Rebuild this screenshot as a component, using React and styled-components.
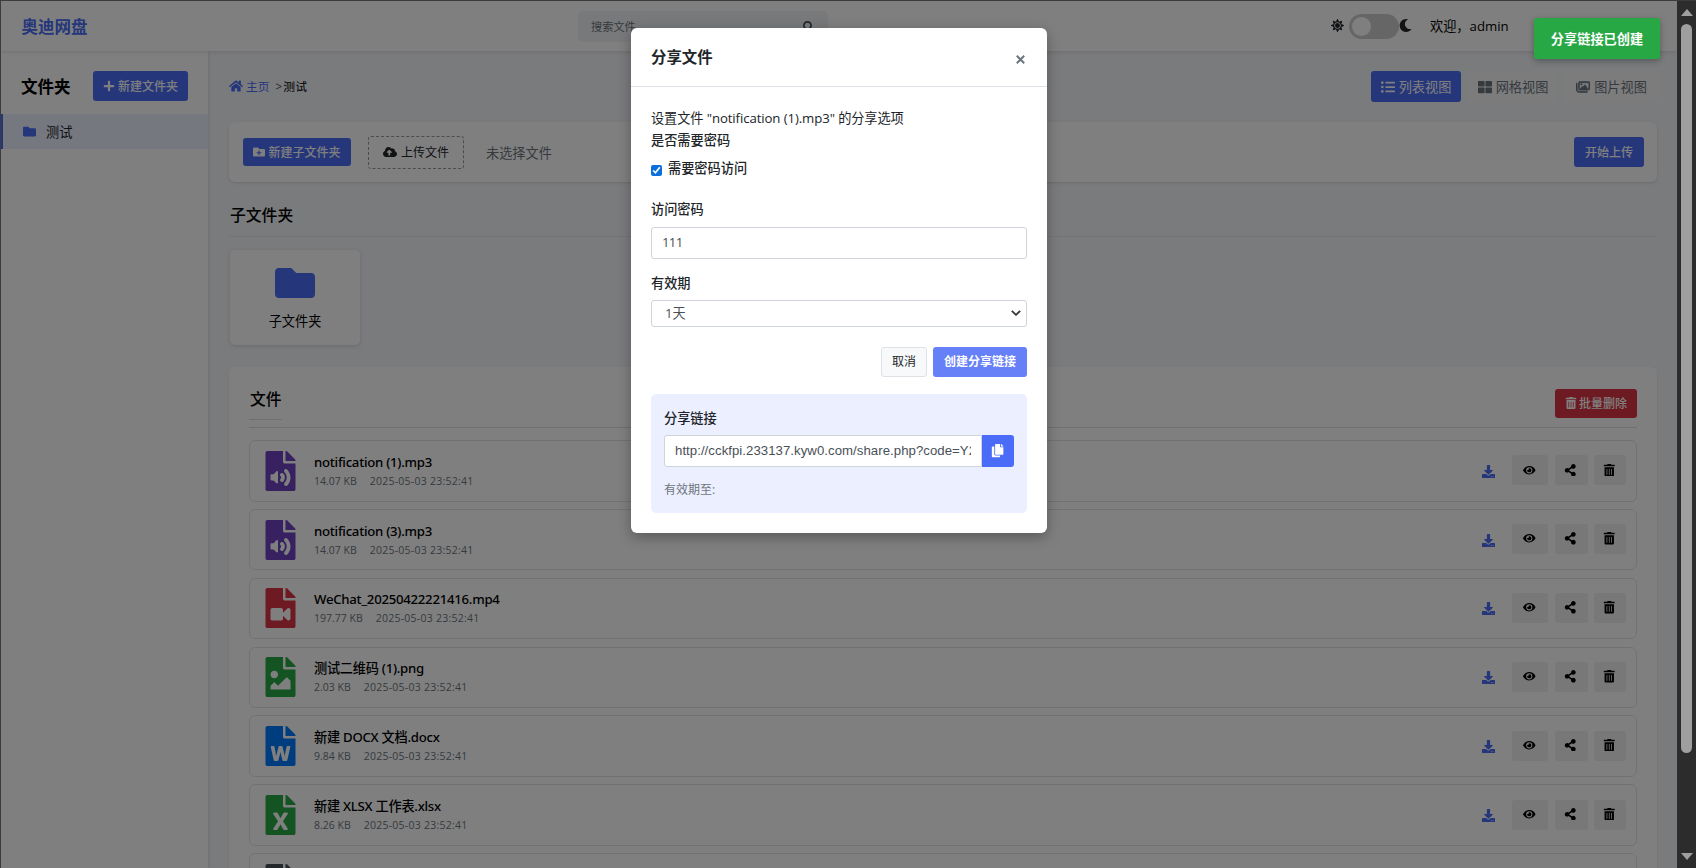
import styled, { createGlobalStyle, css } from 'styled-components';
import {
  FaPlus,
  FaHome,
  FaFolder,
  FaFolderPlus,
  FaCloudUploadAlt,
  FaListUl,
  FaThLarge,
  FaSearch,
  FaSun,
  FaMoon,
  FaTrashAlt,
  FaDownload,
  FaEye,
  FaShareAlt,
  FaSignOutAlt,
  FaFileAudio,
  FaFileVideo,
  FaFileImage,
  FaFileWord,
  FaFileExcel,
  FaFileAlt,
  FaCopy,
} from 'react-icons/fa';
import { FaRegImages } from 'react-icons/fa6';

const files = [
  { name: 'notification (1).mp3', size: '14.07 KB', icon: FaFileAudio, color: '#6f42c1' },
  { name: 'notification (3).mp3', size: '14.07 KB', icon: FaFileAudio, color: '#6f42c1' },
  { name: 'WeChat_20250422221416.mp4', size: '197.77 KB', icon: FaFileVideo, color: '#dc3545' },
  { name: '测试二维码 (1).png', size: '2.03 KB', icon: FaFileImage, color: '#28a745' },
  { name: '新建 DOCX 文档.docx', size: '9.84 KB', icon: FaFileWord, color: '#007bff' },
  { name: '新建 XLSX 工作表.xlsx', size: '8.26 KB', icon: FaFileExcel, color: '#28a745' },
];

const FileRow = ({ file }) => {
  const Icon = file.icon;
  return (
    <Row>
      <FileIcon $color={file.color}>
        <Icon />
      </FileIcon>
      <FileInfo>
        <FileName>{file.name}</FileName>
        <FileMeta>
          <span>{file.size}</span>
          <FileDate>2025-05-03 23:52:41</FileDate>
        </FileMeta>
      </FileInfo>
      <Actions>
        <DownloadLink>
          <FaDownload />
        </DownloadLink>
        <ActionButton $width={36}>
          <FaEye />
        </ActionButton>
        <ActionButton $width={33}>
          <FaShareAlt />
        </ActionButton>
        <ActionButton $width={32}>
          <FaTrashAlt />
        </ActionButton>
      </Actions>
    </Row>
  );
};

const ShareModal = () => (
  <Modal>
    <ModalHeader>
      <ModalTitle>分享文件</ModalTitle>
      <CloseButton>
        <svg width="9" height="9" viewBox="0 0 9 9">
          <path d="M0.8 0.8 8.2 8.2M8.2 0.8 0.8 8.2" stroke="#6c757d" strokeWidth="2" />
        </svg>
      </CloseButton>
    </ModalHeader>
    <ModalBody>
      <ModalText>设置文件 "notification (1).mp3" 的分享选项</ModalText>
      <Label>是否需要密码</Label>
      <CheckRow>
        <Checkbox type="checkbox" defaultChecked />
        需要密码访问
      </CheckRow>
      <Label>访问密码</Label>
      <PasswordInput defaultValue="111" />
      <Label>有效期</Label>
      <SelectBox>
        1天
        <svg width="10" height="6" viewBox="0 0 10 6">
          <path d="M0.8 0.8 5 4.8 9.2 0.8" fill="none" stroke="#333" strokeWidth="1.8" />
        </svg>
      </SelectBox>
      <ModalButtons>
        <CancelButton>取消</CancelButton>
        <CreateButton>创建分享链接</CreateButton>
      </ModalButtons>
      <ResultBox>
        <Label>分享链接</Label>
        <LinkGroup>
          <LinkInput readOnly value="http://cckfpi.233137.kyw0.com/share.php?code=Y2" />
          <CopyButton>
            <FaCopy />
          </CopyButton>
        </LinkGroup>
        <Expire>有效期至:</Expire>
      </ResultBox>
    </ModalBody>
  </Modal>
);

const App = () => (
  <Screen>
    <GlobalStyle />
    <Page>
      <Header>
        <Logo>奥迪网盘</Logo>
        <Search>
          搜索文件
          <FaSearch />
        </Search>
        <UserArea>
          <FaSun />
          <Switch />
          <FaMoon />
          <Welcome>欢迎，admin</Welcome>
          <Logout>
            <FaSignOutAlt />
          </Logout>
        </UserArea>
      </Header>
      <Columns>
        <Sidebar>
          <SidebarHead>
            <SidebarTitle>文件夹</SidebarTitle>
            <Button $width={95} $height={30}>
              <FaPlus />
              新建文件夹
            </Button>
          </SidebarHead>
          <FolderItem>
            <FaFolder />
            测试
          </FolderItem>
        </Sidebar>
        <Content>
          <TopBar>
            <Breadcrumb>
              <a>
                <FaHome />
                主页
              </a>
              <i>&gt;</i>
              测试
            </Breadcrumb>
            <Views>
              <ViewButton $active $width={90}>
                <FaListUl />
                列表视图
              </ViewButton>
              <ViewButton $width={90}>
                <FaThLarge />
                网格视图
              </ViewButton>
              <ViewButton $width={93}>
                <FaRegImages stroke="currentColor" strokeWidth="24" />
                图片视图
              </ViewButton>
            </Views>
          </TopBar>
          <UploadCard>
            <Button $width={108} $height={28}>
              <FaFolderPlus />
              新建子文件夹
            </Button>
            <UploadLabel>
              <FaCloudUploadAlt />
              上传文件
            </UploadLabel>
            <NoFile>未选择文件</NoFile>
            <Button $width={70} $height={30}>
              开始上传
            </Button>
          </UploadCard>
          <SectionTitle>子文件夹</SectionTitle>
          <SubFolder>
            <FaFolder />
            子文件夹
          </SubFolder>
          <FilesCard>
            <FilesHead>
              <FilesTitle>文件</FilesTitle>
              <DeleteButton>
                <FaTrashAlt />
                批量删除
              </DeleteButton>
            </FilesHead>
            {files.map((file) => (
              <FileRow key={file.name} file={file} />
            ))}
            <Row>
              <FileIcon $color="#495057">
                <FaFileAlt />
              </FileIcon>
            </Row>
          </FilesCard>
        </Content>
      </Columns>
    </Page>
    <Scrollbar>
      <Arrow />
      <Thumb />
      <Arrow $down />
    </Scrollbar>
    <Overlay>
      <ShareModal />
    </Overlay>
    <Toast>分享链接已创建</Toast>
  </Screen>
);

const GlobalStyle = createGlobalStyle`
  * {
    box-sizing: border-box;
  }
  body {
    margin: 0;
    background: #3c3c3e;
    overflow: hidden;
  }
  input {
    font-family: inherit;
  }
`;

const center = css`
  display: flex;
  align-items: center;
  justify-content: center;
`;

const Screen = styled.div`
  position: relative;
  display: flex;
  width: 1696px;
  height: 868px;
  padding: 1px 0 0 1px;
  overflow: hidden;
  font-family: 'Open Sans', 'Noto Sans CJK SC', sans-serif;
  font-size: 13.2px;
  color: #212529;
  white-space: nowrap;
`;

const Page = styled.div`
  width: 1676px;
  height: 867px;
  overflow: hidden;
  background: #f5f6fa;
`;

const Header = styled.header`
  position: relative;
  z-index: 1;
  display: flex;
  align-items: center;
  height: 50px;
  padding-left: 20.5px;
  background: white;
  box-shadow: 0 1px 4px rgba(0, 0, 0, 0.12);
`;

const Logo = styled.div`
  width: 556.5px;
  font-size: 16.5px;
  font-weight: 700;
  color: #4a6cf7;
`;

const Search = styled.div`
  display: flex;
  align-items: center;
  justify-content: space-between;
  width: 250px;
  height: 31px;
  padding: 0 14px 0 13px;
  border-radius: 5px;
  background: #f1f2f6;
  font-size: 11.2px;
  color: #6c757d;
  svg {
    font-size: 11px;
    color: #495057;
  }
`;

const UserArea = styled.div`
  display: flex;
  align-items: center;
  margin-left: 503px;
  padding-bottom: 1px;
  svg {
    font-size: 13px;
  }
`;

const Switch = styled.span`
  width: 50px;
  height: 25px;
  margin: 1px 0 0 5px;
  padding: 3px;
  border-radius: 13px;
  background: #ccc;
  &::before {
    content: '';
    display: block;
    width: 19px;
    height: 19px;
    border-radius: 50%;
    background: white;
  }
`;

const Welcome = styled.span`
  margin-left: 18px;
  color: #000;
`;

const Logout = styled.span`
  display: flex;
  margin-left: 25px;
  color: #4a6cf7;
`;

const Columns = styled.div`
  display: flex;
  height: 817px;
`;

const Sidebar = styled.aside`
  width: 207px;
  background: white;
  box-shadow: 1px 0 3px rgba(0, 0, 0, 0.1);
`;

const SidebarHead = styled.div`
  display: flex;
  align-items: center;
  justify-content: space-between;
  height: 63px;
  padding: 7px 20px 0;
`;

const SidebarTitle = styled.h3`
  margin: 0;
  font-size: 16.5px;
  font-weight: 700;
  color: #000;
`;

const Button = styled.button`
  ${center}
  gap: 3px;
  width: ${(props) => props.$width}px;
  height: ${(props) => props.$height}px;
  padding: 0 0 1px;
  border: 0;
  border-radius: 3px;
  background: #4a6cf7;
  font-family: inherit;
  font-size: 12px;
  font-weight: 500;
  color: white;
  white-space: nowrap;
`;

const DeleteButton = styled(Button).attrs({ $width: 82, $height: 29 })`
  gap: 2px;
  margin-top: 1px;
  background: #dc3545;
`;

const FolderItem = styled.div`
  display: flex;
  align-items: center;
  gap: 10px;
  height: 35px;
  padding: 0 0 1px 20px;
  border-left: 2px solid #4a6cf7;
  background: #ebf0ff;
  svg {
    font-size: 13px;
    color: #4a6cf7;
  }
`;

const Content = styled.main`
  flex: 1;
  padding: 20px 20px 0 21px;
`;

const TopBar = styled.div`
  display: flex;
  align-items: center;
  justify-content: space-between;
  height: 31px;
  margin-right: -1px;
`;

const Breadcrumb = styled.div`
  display: flex;
  align-items: center;
  padding-bottom: 2px;
  font-size: 11.8px;
  color: #000;
  a {
    display: flex;
    align-items: center;
    gap: 3px;
    color: #4a6cf7;
  }
  a svg {
    font-size: 14px;
  }
  i {
    margin: 0 1px 0 6px;
    font-style: normal;
    color: #555;
  }
`;

const Views = styled.div`
  display: flex;
  gap: 7px;
`;

const ViewButton = styled.button`
  ${center}
  gap: 4px;
  width: ${(props) => props.$width}px;
  height: 31px;
  padding: 0;
  border: 0;
  border-radius: 3px;
  background: ${(props) => (props.$active ? '#4a6cf7' : '#f8f9fa')};
  font-family: inherit;
  font-size: 13.2px;
  color: ${(props) => (props.$active ? 'white' : '#6c757d')};
  svg {
    font-size: 14px;
  }
`;

const UploadCard = styled.section`
  display: flex;
  align-items: center;
  height: 60px;
  margin-top: 20px;
  padding: 0 13px 0 14px;
  border-radius: 6px;
  background: white;
  box-shadow: 0 1px 3px rgba(0, 0, 0, 0.12);
`;

const UploadLabel = styled.div`
  ${center}
  gap: 4px;
  width: 96px;
  height: 33px;
  margin-left: 17px;
  border: 1px dashed #999;
  border-radius: 3px;
  font-size: 12px;
  svg {
    font-size: 14px;
  }
`;

const NoFile = styled.span`
  flex: 1;
  margin-left: 22px;
  color: #6c757d;
`;

const SectionTitle = styled.h4`
  display: flex;
  align-items: center;
  height: 44px;
  margin: 11px 0 13px;
  padding-left: 1px;
  border-bottom: 1px solid #e8e9ed;
  font-size: 15.8px;
  font-weight: 500;
  color: #000;
`;

const SubFolder = styled.div`
  display: flex;
  flex-direction: column;
  align-items: center;
  gap: 8px;
  width: 130px;
  height: 95px;
  margin-left: 1px;
  padding-top: 13px;
  border-radius: 5px;
  background: white;
  box-shadow: 0 1px 4px rgba(0, 0, 0, 0.14);
  color: #000;
  svg {
    font-size: 40px;
    color: #4a6cf7;
  }
`;

const FilesCard = styled.section`
  height: 520px;
  margin-top: 22px;
  padding: 0 20px;
  border-radius: 6px;
  background: white;
  box-shadow: 0 1px 3px rgba(0, 0, 0, 0.08);
`;

const FilesHead = styled.div`
  display: flex;
  align-items: flex-start;
  justify-content: space-between;
  height: 61px;
  margin-bottom: 12px;
  padding-top: 21px;
  border-bottom: 1px solid #e0e1e5;
`;

const FilesTitle = styled.h4`
  height: 32px;
  margin: 0;
  padding-left: 1px;
  border-bottom: 1px solid #e0e1e5;
  font-size: 15.8px;
  font-weight: 500;
  line-height: 23px;
  color: #000;
`;

const Row = styled.div`
  display: flex;
  align-items: center;
  height: 61.6px;
  margin-bottom: 7.25px;
  padding: 0 10px 0 15px;
  border: 1px solid #e4e5e9;
  border-radius: 6px;
`;

const FileIcon = styled.div`
  display: flex;
  width: 49px;
  font-size: 40px;
  color: ${(props) => props.$color};
  svg {
    width: 31px;
  }
`;

const FileInfo = styled.div`
  flex: 1;
  padding-top: 1px;
`;

const FileName = styled.div`
  font-family: 'Noto Sans', 'Noto Sans CJK SC', sans-serif;
  font-weight: 500;
  line-height: 19px;
  letter-spacing: -0.26px;
  color: #000;
`;

const FileMeta = styled.div`
  display: flex;
  gap: 13px;
  font-size: 10.5px;
  line-height: 18px;
  color: #6c757d;
`;

const FileDate = styled.span`
  letter-spacing: 0.25px;
`;

const Actions = styled.div`
  display: flex;
  align-items: center;
  padding-bottom: 1px;
`;

const DownloadLink = styled.a`
  display: flex;
  margin: 2px 17px 0 0;
  font-size: 13px;
  color: #4a6cf7;
`;

const ActionButton = styled.button`
  ${center}
  width: ${(props) => props.$width}px;
  height: 30px;
  margin-left: ${(props) => (props.$width === 36 ? 0 : 6.5)}px;
  padding: 0 1px 1px 0;
  border: 0;
  border-radius: 3px;
  background: #f0f0f0;
  font-size: 12.5px;
  color: #000;
`;

const Scrollbar = styled.div`
  display: flex;
  flex-direction: column;
  align-items: center;
  justify-content: space-between;
  width: 19px;
  height: 867px;
  padding: 8px 0;
  background: #2c2c2c;
`;

const Arrow = styled.span`
  width: 0;
  height: 0;
  border: 6.5px solid transparent;
  border-width: ${(props) => (props.$down ? '7px 6.5px 0' : '0 6.5px 7px')};
  border-top-color: ${(props) => (props.$down ? '#9f9f9f' : 'transparent')};
  border-bottom-color: ${(props) => (props.$down ? 'transparent' : '#9f9f9f')};
`;

const Thumb = styled.span`
  width: 11px;
  height: 729px;
  margin: 8px 0 auto;
  border-radius: 6px;
  background: #9f9f9f;
`;

/* dims the page, but not the scrollbar */
const Overlay = styled.div`
  position: absolute;
  z-index: 2;
  top: 1px;
  left: 1px;
  display: flex;
  align-items: flex-start;
  justify-content: center;
  width: 1676px;
  height: 867px;
  padding-top: 27px;
  background: rgba(0, 0, 0, 0.5);
`;

const Modal = styled.div`
  width: 416px;
  height: 505px;
  border-radius: 6px;
  background: white;
  box-shadow: 0 4px 14px rgba(0, 0, 0, 0.3);
`;

const ModalHeader = styled.div`
  display: flex;
  align-items: center;
  justify-content: space-between;
  height: 59px;
  padding: 0 22px 0 20px;
  border-bottom: 1px solid #dee2e6;
`;

const ModalTitle = styled.h3`
  margin: 0 0 2px;
  font-size: 15.4px;
  font-weight: 700;
`;

const CloseButton = styled.span`
  display: flex;
  padding-top: 4px;
`;

const ModalBody = styled.div`
  padding: 20px;
`;

const ModalText = styled.div`
  height: 22px;
  line-height: 22px;
  letter-spacing: -0.09px;
`;

const Label = styled.div`
  height: 22px;
  font-weight: 500;
  line-height: 22px;
`;

const CheckRow = styled.label`
  display: flex;
  height: 21px;
  margin: 6px 0 20px;
  font-weight: 500;
  line-height: 22px;
`;

const Checkbox = styled.input`
  width: 11px;
  height: 11px;
  margin: 8px 6px 0 0;
  accent-color: #0b6fdc;
`;

const PasswordInput = styled.input`
  display: block;
  width: 100%;
  height: 32px;
  margin: 7px 0 13px;
  padding: 0 10px 2px;
  border: 1px solid #ced4da;
  border-radius: 3px;
  font-size: 13.2px;
  letter-spacing: -0.7px;
  color: #495057;
`;

const SelectBox = styled.div`
  display: flex;
  align-items: center;
  justify-content: space-between;
  height: 27px;
  margin-top: 6px;
  padding: 0 5px 2px 13px;
  border: 1px solid #ced4da;
  border-radius: 3px;
  color: #495057;
`;

const ModalButtons = styled.div`
  display: flex;
  justify-content: flex-end;
  gap: 6px;
  margin: 20px 0 17px;
`;

const CancelButton = styled.button`
  width: 46px;
  height: 30px;
  padding: 0 0 2px;
  border: 1px solid #dee2e6;
  border-radius: 3px;
  background: #f8f9fa;
  font-family: inherit;
  font-size: 12px;
  color: #212529;
`;

const CreateButton = styled(Button).attrs({ $width: 94, $height: 30 })`
  padding-bottom: 2px;
  background: #6680f8;
  font-weight: 700;
`;

const ResultBox = styled.div`
  height: 119px;
  padding: 13px;
  border-radius: 5px;
  background: #ecefff;
`;

const LinkGroup = styled.div`
  display: flex;
  height: 32px;
  margin-top: 6px;
`;

const LinkInput = styled.input`
  flex: 1;
  min-width: 0;
  padding: 0 10px 2px;
  border: 1px solid #ced4da;
  border-radius: 3px 0 0 3px;
  font-family: 'Liberation Sans', sans-serif;
  font-size: 13.2px;
  letter-spacing: 0.05px;
  color: #495057;
`;

const CopyButton = styled.span`
  ${center}
  width: 32px;
  border-radius: 0 3px 3px 0;
  background: #4a6cf7;
  color: white;
`;

const Expire = styled.div`
  margin-top: 13px;
  font-size: 12px;
  color: #6c757d;
`;

const Toast = styled.div`
  ${center}
  position: absolute;
  z-index: 3;
  top: 18px;
  left: 1534px;
  width: 126px;
  height: 41px;
  border-radius: 3px;
  background: #28a745;
  box-shadow: 0 2px 6px rgba(0, 0, 0, 0.3);
  font-weight: 700;
  color: white;
`;

export default App;
